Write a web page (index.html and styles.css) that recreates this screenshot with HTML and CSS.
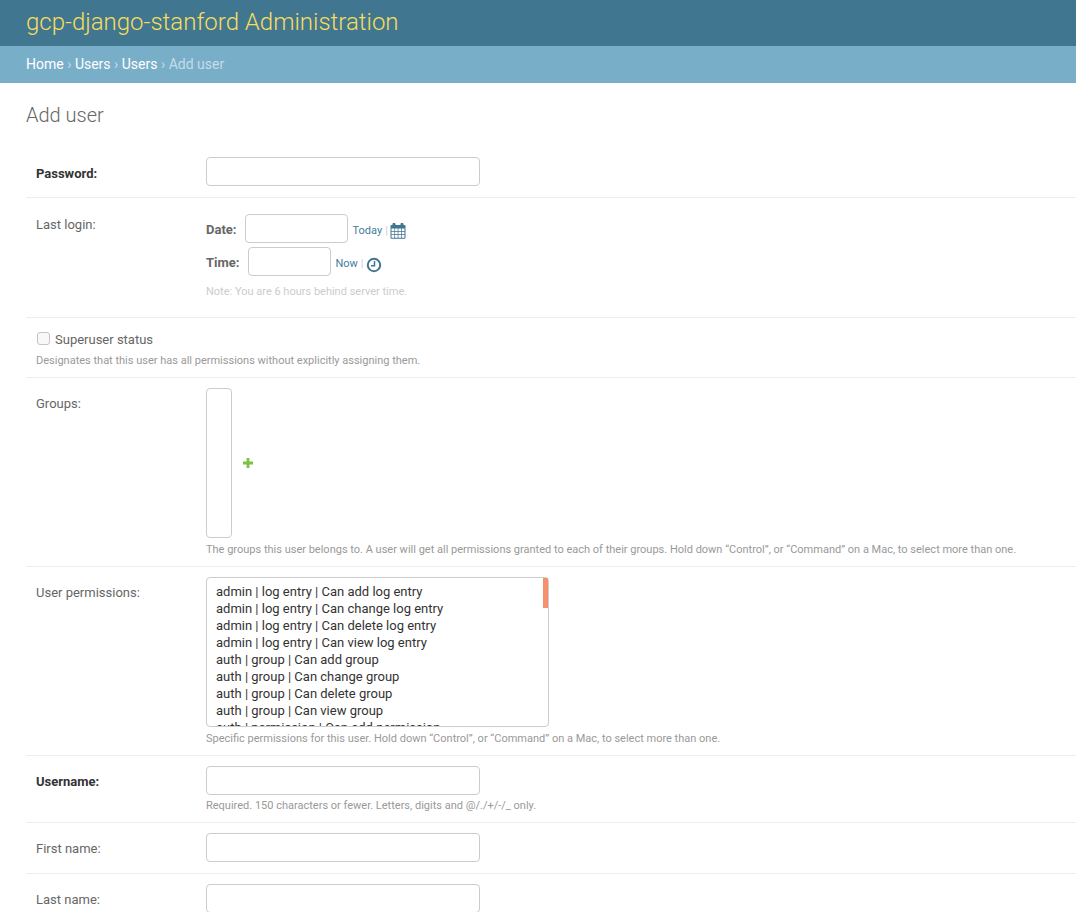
FILE: index.html
```html
<!DOCTYPE html>
<html lang="en">
<head>
  <meta charset="UTF-8">
  <title>Add user | gcp-django-stanford Administration</title>
  <link rel="stylesheet" href="styles.css">
</head>
<body>
  <header class="site-header">
    <h1 class="branding">gcp-django-stanford Administration</h1>
  </header>
  <nav class="breadcrumbs">
    <a href="#">Home</a> <span class="sep">›</span> <a href="#">Users</a> <span class="sep">›</span> <a href="#">Users</a> <span class="sep">›</span> Add user
  </nav>

  <main class="content">
    <h2 class="page-title">Add user</h2>

    <form class="user-form">
      <div class="form-row single-line">
        <label class="field-label label-low required" for="password">Password:</label>
        <div class="field-body">
          <input class="text-input" id="password" type="password">
        </div>
      </div>

      <div class="form-row">
        <label class="field-label label-low">Last login:</label>
        <div class="field-body datetime">
          <div class="datetime-line">
            <span class="datetime-label">Date:</span>
            <input class="text-input date-input" type="text">
            <span class="shortcuts"><a href="#" class="today-link">Today</a> <span class="pipe">|</span>
              <svg class="icon" width="16" height="16" viewBox="0 0 16 16">
                <path fill="#417690" fill-rule="evenodd" d="M3.4 0h1.2a.9.9 0 0 1 .9.9V2h5V.9a.9.9 0 0 1 .9-.9h1.2a.9.9 0 0 1 .9.9V2h1a1 1 0 0 1 1 1v11.8a1 1 0 0 1-1 1h-13a1 1 0 0 1-1-1V3a1 1 0 0 1 1-1h1V.9a.9.9 0 0 1 .9-.9zM1.5 5.6v2.6h2.9V5.6zm3.6 0v2.6h2.6V5.6zm3.3 0v2.6H11V5.6zm3.3 0v2.6h2.8V5.6zM1.5 8.9v2.4h2.9V8.9zm3.6 0v2.4h2.6V8.9zm3.3 0v2.4H11V8.9zm3.3 0v2.4h2.8V8.9zM1.5 12v2.7h2.9V12zm3.6 0v2.7h2.6V12zm3.3 0v2.7H11V12zm3.3 0v2.7h2.8V12z"/>
              </svg>
            </span>
          </div>
          <div class="datetime-line">
            <span class="datetime-label time-label">Time:</span>
            <input class="text-input time-input" type="text">
            <span class="shortcuts now-shortcut"><a href="#">Now</a> <span class="pipe">|</span>
              <svg class="icon clock-icon" width="16" height="16" viewBox="0 0 16 16">
                <circle cx="8" cy="8" r="6.2" fill="none" stroke="#417690" stroke-width="2"/>
                <path fill="none" stroke="#417690" stroke-width="1.5" d="M8.5 4v4.7H5"/>
              </svg>
            </span>
          </div>
          <p class="timezone-note">Note: You are 6 hours behind server time.</p>
        </div>
      </div>

      <div class="form-row checkbox-row">
        <label class="checkbox-label"><input class="checkbox" type="checkbox"> Superuser status</label>
        <p class="help">Designates that this user has all permissions without explicitly assigning them.</p>
      </div>

      <div class="form-row">
        <label class="field-label" for="groups">Groups:</label>
        <div class="field-body">
          <div class="related-wrap">
            <select class="multi-select groups-select" id="groups" multiple></select>
            <a href="#" class="add-related">
              <svg width="10" height="10" viewBox="0 0 10 10"><path fill="#7cc243" d="M3.6 0h2.8v3.6H10v2.8H6.4V10H3.6V6.4H0V3.6h3.6z"/></svg>
            </a>
          </div>
          <p class="help select-help">The groups this user belongs to. A user will get all permissions granted to each of their groups. Hold down “Control”, or “Command” on a Mac, to select more than one.</p>
        </div>
      </div>

      <div class="form-row">
        <label class="field-label" for="permissions">User permissions:</label>
        <div class="field-body">
          <div class="select-wrap">
            <select class="multi-select permissions-select" id="permissions" multiple>
              <option>admin | log entry | Can add log entry</option>
              <option>admin | log entry | Can change log entry</option>
              <option>admin | log entry | Can delete log entry</option>
              <option>admin | log entry | Can view log entry</option>
              <option>auth | group | Can add group</option>
              <option>auth | group | Can change group</option>
              <option>auth | group | Can delete group</option>
              <option>auth | group | Can view group</option>
              <option>auth | permission | Can add permission</option>
            </select>
            <span class="scroll-thumb"></span>
          </div>
          <p class="help select-help">Specific permissions for this user. Hold down “Control”, or “Command” on a Mac, to select more than one.</p>
        </div>
      </div>

      <div class="form-row">
        <label class="field-label required" for="username">Username:</label>
        <div class="field-body">
          <input class="text-input" id="username" type="text">
          <p class="help">Required. 150 characters or fewer. Letters, digits and @/./+/-/_ only.</p>
        </div>
      </div>

      <div class="form-row single-line">
        <label class="field-label" for="first-name">First name:</label>
        <div class="field-body">
          <input class="text-input" id="first-name" type="text">
        </div>
      </div>

      <div class="form-row single-line">
        <label class="field-label" for="last-name">Last name:</label>
        <div class="field-body">
          <input class="text-input" id="last-name" type="text">
        </div>
      </div>
    </form>
  </main>
</body>
</html>
```

FILE: styles.css
```css
/* General Styles */
html, body {
  height: 100%;
  overflow: hidden;
}

body {
  margin: 0;
  font-family: Roboto, "Liberation Sans", sans-serif;
  font-size: 14px;
  color: #333;
  background-color: #fff;
}

a {
  color: #447e9b;
  text-decoration: none;
}

/* Header */
.site-header {
  box-sizing: border-box;
  height: 46px;
  padding: 0 26px 2px;
  background-color: #417690;
  display: flex;
  align-items: center;
}

.branding {
  margin: 0;
  font-size: 24px;
  font-weight: 300;
  color: #f5dd5d;
}

.breadcrumbs {
  height: 37px;
  line-height: 36px;
  padding: 0 26px;
  background-color: #79aec8;
  color: #c4dce8;
  font-size: 14px;
}

.breadcrumbs a {
  color: #fff;
}

.breadcrumbs .sep {
  font-size: 14px;
}

/* Content */
.content {
  padding: 20px 0 0 26px;
}

.page-title {
  margin: 0 0 20px;
  font-size: 20px;
  line-height: 24px;
  font-weight: 300;
  color: #666;
}

.form-row {
  display: flex;
  padding: 10px;
  border-bottom: 1px solid #eee;
}

.single-line {
  min-height: 30px;
}

.field-label {
  width: 170px;
  flex-shrink: 0;
  padding-top: 8px;
  font-size: 13px;
  line-height: 16px;
  color: #666;
}

.label-low {
  padding-top: 9px;
}

.field-label.required {
  font-weight: 700;
  color: #333;
}

.field-body {
  flex: 1;
}

.text-input {
  display: block;
  box-sizing: border-box;
  width: 274px;
  height: 29px;
  margin: 0;
  padding: 5px 6px;
  border: 1px solid #ccc;
  border-radius: 4px;
  background-color: #fff;
}

.help {
  margin: 0 0 -1px;
  padding-top: 4px;
  font-size: 11px;
  line-height: 14px;
  color: #999;
}

.select-help {
  margin-top: 1px;
}

/* Date and time */
.datetime {
  padding-top: 6px;
}

.datetime-line {
  display: flex;
  align-items: center;
  margin-bottom: 4px;
  font-size: 11px;
}

.datetime-label {
  margin-right: 8px;
  padding-top: 2px;
  font-size: 13px;
  font-weight: 700;
  color: #666;
}

.time-label {
  margin-right: 9px;
}

.date-input {
  width: 103px;
}

.time-input {
  width: 83px;
}

.shortcuts {
  display: flex;
  align-items: center;
  gap: 3px;
  margin-left: 5px;
  padding-top: 4px;
  color: #ccc;
}

.now-shortcut {
  margin-left: 4px;
}

.icon {
  margin-left: -1px;
}

.clock-icon {
  margin-top: 2px;
}

.timezone-note {
  margin: 0;
  padding: 5px 0 8px;
  font-size: 11px;
  line-height: 14px;
  color: #ccc;
}

/* Checkbox */
.checkbox-row {
  display: block;
  height: 39px;
}

.checkbox-label {
  display: flex;
  align-items: center;
  height: 22px;
  font-size: 13px;
  color: #666;
}

.checkbox {
  appearance: none;
  box-sizing: border-box;
  width: 13px;
  height: 13px;
  margin: 0 5px 2px 1px;
  border: 1px solid #c4c4c4;
  border-radius: 3px;
  background-color: #f8f8f8;
}

/* Select boxes */
.related-wrap {
  display: flex;
  align-items: center;
}

.multi-select {
  display: block;
  box-sizing: border-box;
  height: 150px;
  margin: 0;
  padding: 6px 6px 5px;
  border: 1px solid #ccc;
  border-radius: 4px;
  background-color: #fff;
  font-family: Roboto, "Liberation Sans", sans-serif;
  font-size: 13px;
  color: #333;
}

.groups-select {
  width: 26px;
}

.add-related {
  display: flex;
  margin-left: 11px;
}

.select-wrap {
  position: relative;
  width: 343px;
}

.permissions-select {
  width: 343px;
  overflow: hidden;
}

.permissions-select option {
  min-height: 17px;
  line-height: 17px;
  padding: 0 3px;
  color: #333;
}

.scroll-thumb {
  position: absolute;
  top: 1px;
  right: 1px;
  width: 5px;
  height: 30px;
  background-color: #f5916c;
}
```
